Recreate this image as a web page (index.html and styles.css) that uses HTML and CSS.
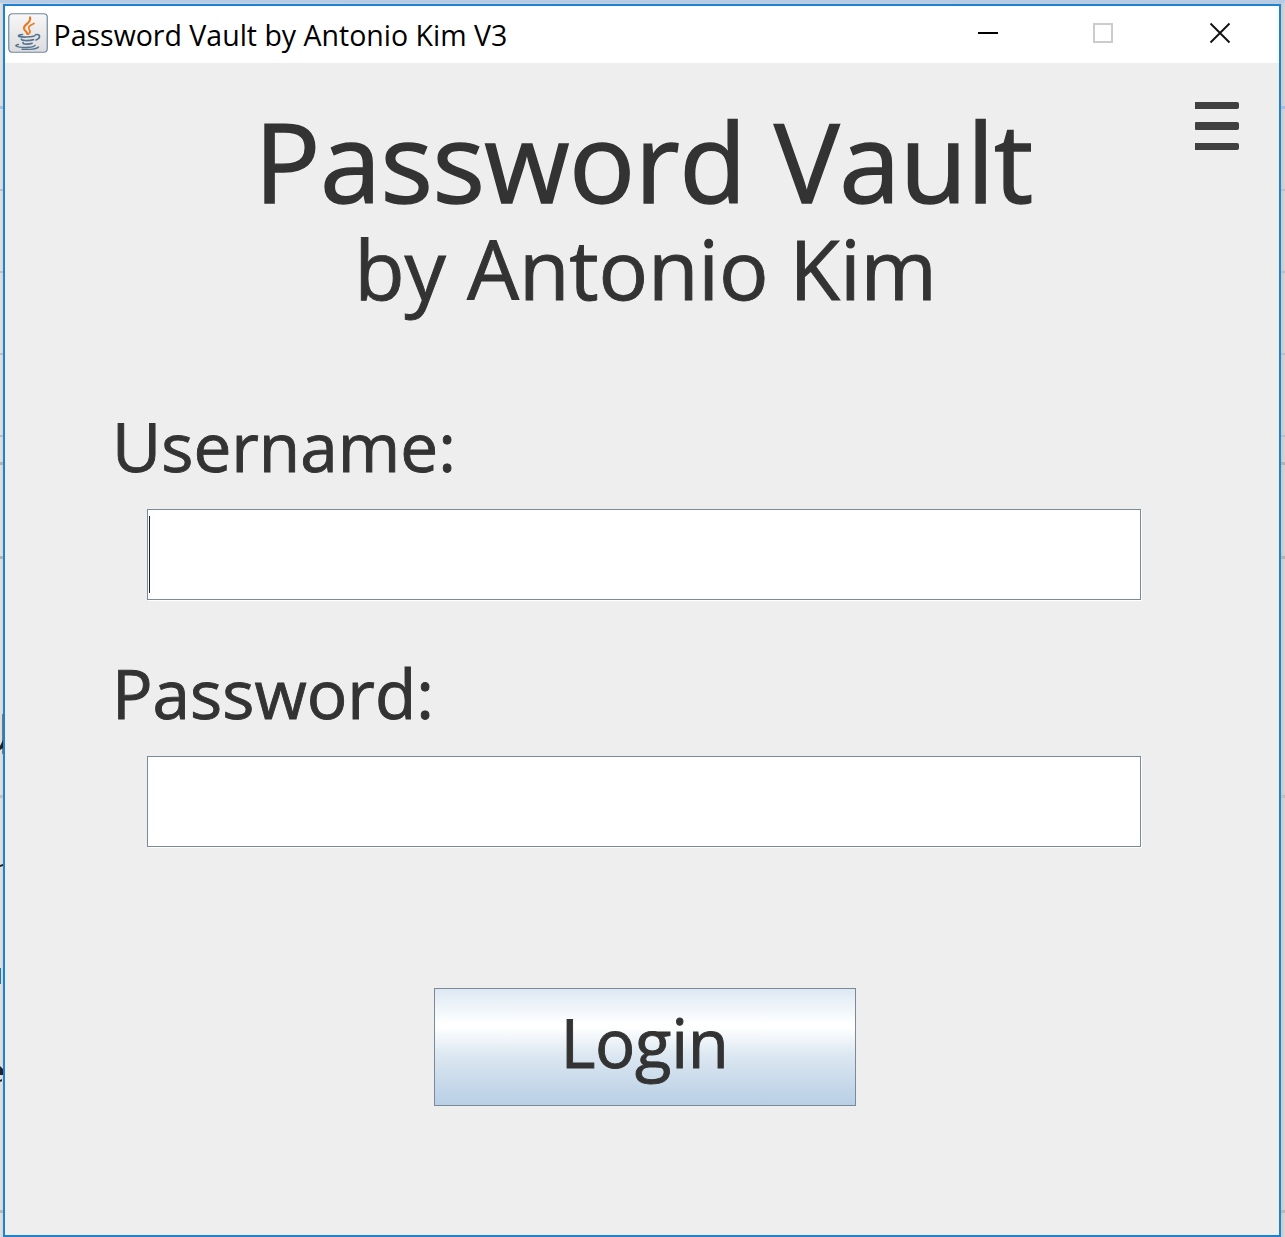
FILE: index.html
```html
<!DOCTYPE html>
<html lang="en">
<head>
<meta charset="utf-8">
<title>Password Vault by Antonio Kim V3</title>
<link rel="stylesheet" href="styles.css">
</head>
<body>
<svg class="behind" width="3" height="400" viewBox="0 0 3 400" aria-hidden="true">
  <path d="M2 14h1v40h-1z" fill="#777"/>
  <path d="M0 46L3 40V48L0 50z" fill="#222"/>
  <path d="M0 165L3 164V166L0 167z" fill="#222"/>
  <path d="M0 268h1v16h-1z" fill="#1878b8"/>
  <path d="M0 366L3 369V375H0zM0 380l2-1v2l-2 1z" fill="#223"/>
</svg>
<main class="window">
  <header class="titlebar">
    <svg class="java" width="40" height="40" viewBox="0 0 40 40" aria-hidden="true">
      <defs><linearGradient id="tile" x1="0" y1="0" x2="0" y2="1"><stop offset="0" stop-color="#f7f7f7"/><stop offset="1" stop-color="#dcdcde"/></linearGradient></defs>
      <rect x=".75" y=".75" width="38.5" height="38.5" rx="3.5" fill="url(#tile)" stroke="#7088a0" stroke-width="1.2"/>
      <g fill="none" stroke="#e87a24" stroke-linecap="round">
        <path d="M22 4.500c2 5-6.500 6.500-6 11 .3 2.500 3 3 3.500 5.500" stroke-width="2.200"/>
        <path d="M26 10.500c-5 2-6.500 4-4.500 6.500 1 1.500.5 3-1 4" stroke-width="1.700"/>
      </g>
      <g fill="none" stroke="#55748e" stroke-width="1.700" stroke-linecap="round">
        <path d="M14.500 21.500c-3 .3-5 1.200-3.500 1.900 3 1 11 .8 15.500-.4"/>
        <path d="M27.500 21.800c5-1.500 5.500 3.500 .5 5.200"/>
        <path d="M13.500 26.200c-1 1.700 8 1.700 12 .4M15 29.700c0 1.800 6.500 1.800 9 .5"/>
        <path d="M10.500 31.500c-4 .6-3.500 2 1 2.600 6 .8 14 .2 15.500-1.800M14 36.200c7 .6 15-.2 16.500-2.200" stroke-width="1.400"/>
      </g>
    </svg>
    <span class="caption">Password Vault by Antonio Kim V3</span>
    <svg class="controls" width="242" height="22" viewBox="0 0 242 22" aria-hidden="true">
      <path d="M0 10h20v2H0z" fill="#000"/>
      <rect x="116" y="2" width="18" height="18" fill="none" stroke="#ccc" stroke-width="2"/>
      <path d="M232.500 1.500l19 19M251.500 1.500l-19 19" stroke="#111" stroke-width="1.900"/>
    </svg>
  </header>
  <section class="content">
    <button class="menu" aria-label="Menu"><i></i><i></i><i></i></button>
    <h1>Password Vault</h1>
    <h2>by Antonio Kim</h2>
    <form>
      <label for="user">Username:</label>
      <div class="field" id="user"><span class="caret"></span></div>
      <label for="pass">Password:</label>
      <div class="field" id="pass"></div>
      <button class="login" type="button"><span>Login</span></button>
    </form>
  </section>
</main>
</body>
</html>
```
FILE: styles.css
```css
* { box-sizing: border-box; }
html, body { height: 100%; }
body {
  margin: 0;
  padding: 4px 4px 0 3px;
  overflow: hidden;
  font-family: "Open Sans", sans-serif;
  color: #333;
  background:
    linear-gradient(#b4cce8, #b4cce8) 0 0 / 100% 3px no-repeat,
    linear-gradient(#a9c0dc, #a9c0dc) 0 106px / 100% 3px no-repeat,
    linear-gradient(#b8c0cb, #b8c0cb) 0 189px / 100% 2px no-repeat,
    linear-gradient(#b8c0cb, #b8c0cb) 0 271px / 100% 2px no-repeat,
    linear-gradient(#b8c0cb, #b8c0cb) 0 353px / 100% 2px no-repeat,
    linear-gradient(#b8c0cb, #b8c0cb) 0 435px / 100% 2px no-repeat,
    linear-gradient(#b4b4b4, #b4b4b4) 0 462px / 100% 3px no-repeat,
    linear-gradient(#b4b4b4, #b4b4b4) 0 556px / 100% 3px no-repeat,
    linear-gradient(#c0c0c0, #c0c0c0) 0 795px / 100% 3px no-repeat,
    linear-gradient(#b9b9b9, #b9b9b9) 0 1210px / 100% 3px no-repeat,
    linear-gradient(90deg, #e2e2e2 0, #d5d5d5 3px, #c8c8c8 1281px, #d6d6d6 1285px);
}
.behind { position: absolute; left: 0; top: 700px; }
.window {
  display: flex;
  flex-direction: column;
  height: 1233px;
  border: 2px solid #1c82d4;
  background: #eee;
}
.titlebar {
  display: flex;
  height: 57px;
  padding: 0 49px 0 3px;
  background: #fff;
}
.java { margin-top: 7px; }
.caption {
  margin-left: 5.5px;
  font-size: 28.5px;
  line-height: 58px;
  white-space: nowrap;
  color: #000;
}
.controls { margin: 16px 10px 0 auto; overflow: visible; }
.content { position: relative; flex: 1; padding: 37px 0 0; }
.menu {
  position: absolute;
  top: 39px;
  right: 40px;
  display: flex;
  flex-direction: column;
  justify-content: space-between;
  width: 44px;
  height: 48px;
  padding: 0;
  border: 0;
  background: none;
}
.menu i { height: 7px; border-radius: 0 2px 2px 0; background: #404040; }
.menu i:nth-child(2) { height: 8px; border-radius: 1px 2px 2px 1px; }
h1, h2 { margin: 0; font-weight: 400; text-align: center; white-space: nowrap; }
h1 {
  padding-left: 3px;
  font-size: 110px;
  line-height: 120px;
  letter-spacing: -.5px;
  -webkit-text-stroke: 1.4px #333;
}
h2 {
  padding-left: 7px;
  font-size: 82.5px;
  line-height: 96px;
  letter-spacing: -.2px;
  -webkit-text-stroke: .9px #333;
}
form { display: flex; flex-direction: column; padding: 89px 138px 0 142px; }
label {
  position: relative;
  top: 1px;
  margin-left: -35px;
  font-size: 67.5px;
  line-height: 80px;
  -webkit-text-stroke: .9px #333;
}
.field {
  height: 91px;
  margin: 24px 0 52px;
  padding: 6px 0 0 1px;
  border: 1px solid #7a8a99;
  background: #fff;
  box-shadow: 1px 1px #fff;
}
.caret { display: block; width: 1px; height: 77px; background: #222; }
.login {
  align-self: center;
  width: 422px;
  height: 118px;
  margin: 89px 0 0 1px;
  padding: 0 0 11px;
  border: 1px solid #7a8a99;
  background: linear-gradient(#dde8f3, #fff 30%, #fff 33%, #dce7f1 57%, #b8cfe5);
  font: 67px/80px "Open Sans", sans-serif;
  letter-spacing: -.3px;
  -webkit-text-stroke: .9px #333;
  color: #333;
}
```
